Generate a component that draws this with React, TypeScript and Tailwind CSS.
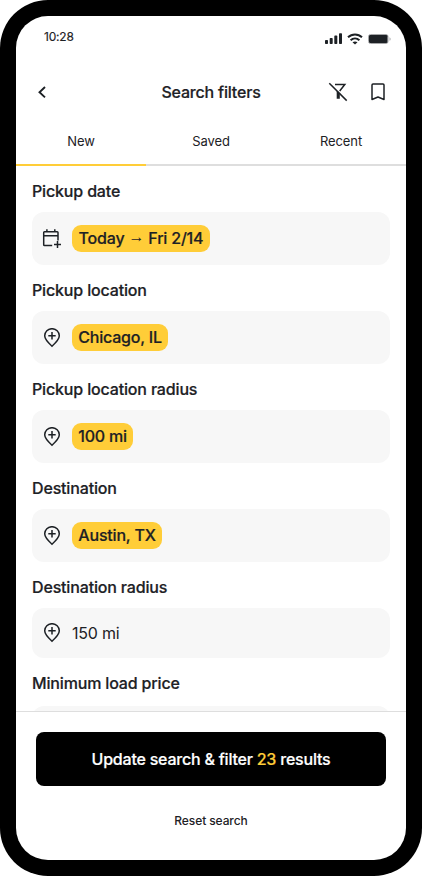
import type { ReactNode } from "react";

function SignalIcon() {
  return (
    <svg width="17" height="11" viewBox="0 0 17 11" fill="#1d2125">
      <rect x="0" y="7" width="3" height="4" rx="0.8" />
      <rect x="4.7" y="5" width="3" height="6" rx="0.8" />
      <rect x="9.3" y="2.6" width="3" height="8.4" rx="0.8" />
      <rect x="14" y="0.2" width="3" height="10.8" rx="0.8" />
    </svg>
  );
}

function WifiIcon() {
  return (
    <svg width="16" height="12" viewBox="0 0 16 12" fill="none" stroke="#1d2125" strokeWidth="2">
      <path d="M1 4.3C5 .4 11 .4 15 4.3" />
      <path d="M3.6 7.300C6.200 4.900 9.800 4.900 12.400 7.300" />
      <path d="M8 11.600 5.500 9.300C7 8.100 9 8.100 10.500 9.300Z" fill="#1d2125" stroke="none" />
    </svg>
  );
}

function BatteryIcon() {
  return (
    <svg width="24" height="10" viewBox="0 0 24 10">
      <rect x="0.5" y="0.5" width="19.500" height="9" rx="2" fill="#fff" stroke="#a5a6a8" />
      <rect x="1" y="1" width="18.500" height="8" rx="1.300" fill="#1d2125" />
      <path d="M21.500 3.200v3.600c1.500-.5 1.500-3.100 0-3.600Z" fill="#a5a6a8" />
    </svg>
  );
}

function BackIcon() {
  return (
    <svg width="20" height="20" viewBox="0 0 20 20" fill="none" stroke="#1d2125" strokeWidth="1.900">
      <path d="m13 5-5.500 5.200 5.500 5.200" />
    </svg>
  );
}

function FilterOffIcon() {
  return (
    <svg width="20" height="20" viewBox="0 0 20 20" fill="none" stroke="#1d2125" strokeWidth="1.500">
      <path d="M1.300 1.200 18.700 18.600" />
      <path d="M7 2.500h9.800L11.700 9" />
      <path d="M8.700 9.200h1.300l1.800 2v5.600H8.700Z" fill="#1d2125" stroke="none" />
    </svg>
  );
}

function BookmarkIcon() {
  return (
    <svg width="14" height="18" viewBox="0 0 14 18" fill="none" stroke="#1d2125" strokeWidth="1.500" strokeLinejoin="round">
      <path d="M1 2q0-1 1-1h10q1 0 1 1v14.500l-6-2.500-6 2.500Z" />
    </svg>
  );
}

function CalendarIcon() {
  return (
    <svg width="20" height="20" viewBox="0 0 20 20" fill="none" stroke="#1d2125" strokeWidth="1.500">
      <path d="M10.200 16.500H2.500q-.8 0-.8-.8V3.500q0-.8.8-.8h12.700q.8 0 .8.8V11.500" />
      <path d="M1.700 6.800H16M4.900.3v2.500M12.800.3v2.500M15.500 12v7M12 15.500h7" />
    </svg>
  );
}

function PinIcon() {
  return (
    <svg width="20" height="20" viewBox="0 0 20 20" fill="none" stroke="#1d2125" strokeWidth="1.500">
      <path d="M10 18.200C7 15.500 2.700 11.600 2.700 7.800a7.300 7.100 0 0 1 14.600 0C17.300 11.600 13 15.500 10 18.200Z" />
      <path d="M10 4.100v7.400M6.300 7.800h7.400" />
    </svg>
  );
}

function Label({ children, className = "" }: { children: ReactNode; className?: string }) {
  return (
    <h2 className={`flex h-[46px] shrink-0 items-center whitespace-nowrap pt-[3px] text-base font-medium tracking-[-0.16px] [-webkit-text-stroke:0.2px_currentColor] ${className}`}>
      {children}
    </h2>
  );
}

function Chip({ children, className }: { children: ReactNode; className: string }) {
  return (
    <span className={`flex h-[27px] items-center justify-center whitespace-pre rounded-[9px] bg-[#ffcd38] pb-[2px] text-base font-medium tracking-[-0.2px] [-webkit-text-stroke:0.2px_currentColor] ${className}`}>
      {children}
    </span>
  );
}

function Field({ icon, children }: { icon: ReactNode; children: ReactNode }) {
  return (
    <div className="flex h-[53px] shrink-0 items-center gap-2.5 rounded-xl bg-[#f7f7f7] pl-2.5">
      {icon}
      {children}
    </div>
  );
}

export default function App() {
  return (
    <div className="flex h-[876px] w-[422px] flex-col overflow-hidden rounded-[48px] bg-black p-4 font-['Inter','Liberation_Sans',sans-serif] text-[#1d2125]">
      <div className="flex min-h-0 flex-1 flex-col overflow-hidden rounded-[32px] bg-white">
        <div className="flex h-[42px] shrink-0 items-center justify-between pl-7 pr-[14px]">
          <span className="text-xs tracking-[-0.2px] [-webkit-text-stroke:0.15px_currentColor]">10:28</span>
          <div className="flex items-center gap-[5px] pt-[3px]">
            <SignalIcon />
            <WifiIcon />
            <BatteryIcon />
          </div>
        </div>

        <header className="grid h-[68px] shrink-0 grid-cols-[1fr_auto_1fr] items-center pl-4 pr-[21px]">
          <BackIcon />
          <h1 className="pb-px pl-[5px] text-base font-medium tracking-[-0.2px] [-webkit-text-stroke:0.2px_currentColor]">Search filters</h1>
          <div className="flex items-center justify-end gap-[23px]">
            <FilterOffIcon />
            <BookmarkIcon />
          </div>
        </header>

        <nav className="grid h-10 shrink-0 grid-cols-3 text-[13px] tracking-[-0.1px]">
          <button className="border-b-2 border-[#ffcd38] pb-[7px]">New</button>
          <button className="border-b-2 border-[#dedede] pb-[7px]">Saved</button>
          <button className="border-b-2 border-[#dedede] pb-[7px]">Recent</button>
        </nav>

        <main className="flex min-h-0 flex-1 flex-col overflow-hidden px-4">
          <Label>Pickup date</Label>
          <Field icon={<CalendarIcon />}>
            <Chip className="w-[138px]">
              Today <span className="pb-px font-['Liberation_Sans'] [-webkit-text-stroke:0px]">→</span> Fri 2/14
            </Chip>
          </Field>
          <Label>Pickup location</Label>
          <Field icon={<PinIcon />}>
            <Chip className="w-24">Chicago, IL</Chip>
          </Field>
          <Label>Pickup location radius</Label>
          <Field icon={<PinIcon />}>
            <Chip className="w-[61px]">100 mi</Chip>
          </Field>
          <Label>Destination</Label>
          <Field icon={<PinIcon />}>
            <Chip className="w-[90px]">Austin, TX</Chip>
          </Field>
          <Label>Destination radius</Label>
          <div className="flex h-[50px] shrink-0 items-center gap-2.5 rounded-xl bg-[#f7f7f7] pl-2.5">
            <PinIcon />
            <span className="text-base tracking-[-0.2px]">150 mi</span>
          </div>
          <Label className="mb-[2px]">Minimum load price</Label>
          <div className="h-[53px] shrink-0 rounded-xl bg-[#f7f7f7]" />
        </main>

        <footer className="flex h-[149px] shrink-0 flex-col items-center border-t border-[#dedede] pt-5">
          <button className="h-[54px] w-[350px] rounded-lg bg-black text-base font-medium tracking-[-0.22px] text-white [-webkit-text-stroke:0.2px_currentColor]">
            Update search &amp; filter <span className="text-[#ffcd38]">23</span> results
          </button>
          <button className="mt-[27px] text-xs font-medium tracking-[-0.1px]">Reset search</button>
        </footer>
      </div>
    </div>
  );
}
